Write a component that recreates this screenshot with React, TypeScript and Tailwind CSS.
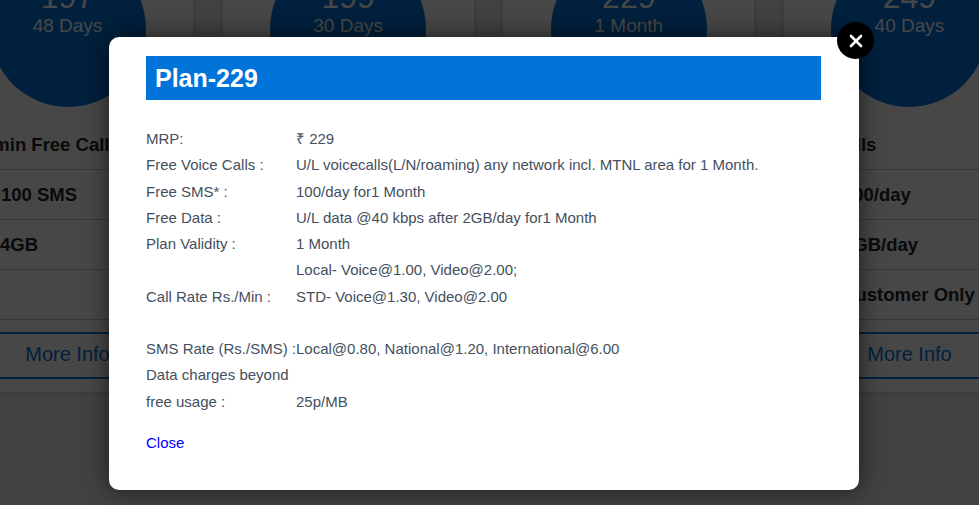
import React from "react";

const cards = [
  { n: "197", d: "48 Days", rows: [
    { t: "1000 min Free Calls", c: "pl-[5px]" },
    { t: "100 SMS", c: "pl-[59px]" },
    { t: "4GB", c: "pl-[58px]" },
    { t: "", c: "" },
  ] },
  { n: "199", d: "30 Days", rows: [
    { t: "U/L Free Calls", c: "pl-[20px]" },
    { t: "100/day", c: "pl-[60px]" },
    { t: "2GB/day", c: "pl-[60px]" },
    { t: "", c: "" },
  ] },
  { n: "229", d: "1 Month", rows: [
    { t: "U/L Free Calls", c: "pl-[20px]" },
    { t: "100/day", c: "pl-[60px]" },
    { t: "2GB/day", c: "pl-[60px]" },
    { t: "", c: "" },
  ] },
  { n: "249", d: "40 Days", rows: [
    { t: "Free Calls", c: "pl-[4px]" },
    { t: "100/day", c: "pl-[59px]" },
    { t: "3GB/day", c: "pl-[59px]" },
    { t: "New Customer Only", c: "pl-[15px]" },
  ] },
];

const details: [string, string][] = [
  ["MRP:", "₹ 229"],
  ["Free Voice Calls :", "U/L voicecalls(L/N/roaming) any network incl. MTNL area for 1 Month."],
  ["Free SMS* :", "100/day for1 Month"],
  ["Free Data :", "U/L data @40 kbps after 2GB/day for1 Month"],
  ["Plan Validity :", "1 Month"],
  ["", "Local- Voice@1.00, Video@2.00;"],
  ["Call Rate Rs./Min :", "STD- Voice@1.30, Video@2.00"],
  ["", "\u00a0"],
  ["SMS Rate (Rs./SMS) :", "Local@0.80, National@1.20, International@6.00"],
  ["Data charges beyond", ""],
  ["free usage :", "25p/MB"],
];

export default function App() {
  return (
    <div className="relative h-[505px] w-[979px] overflow-hidden bg-[#ececec] font-['Liberation_Sans',Arial,sans-serif]">
      <div className="ml-[-58px] flex gap-[29.67px]">
        {cards.map((card) => (
          <div key={card.n} className="flex h-[392px] w-[251px] shrink-0 flex-col items-center bg-white shadow-[0_0_6px_rgba(0,0,0,0.2)]">
            <div className="mt-[-49px] flex h-[156px] w-[156px] shrink-0 flex-col items-center rounded-full bg-[#0074d9] pt-[29px] text-white">
              <div className="text-[32px] leading-[35px]">{card.n}</div>
              <div className="text-[19px] leading-[22px]">{card.d}</div>
            </div>
            <div className="mt-[13px] w-full">
              {card.rows.map((r, i) => (
                <div key={i} className={`h-[50px] whitespace-nowrap border-b border-[#c4c4c4] text-[18.5px] font-bold leading-[50px] text-[#212529] ${r.c}`}>
                  {r.t}
                </div>
              ))}
            </div>
            <div className="mt-[12px] h-[47px] w-full border-y-2 border-[#0074d9] text-center text-[20px] leading-[41px] text-[#0074d9]">
              More Info
            </div>
          </div>
        ))}
      </div>
      <div className="absolute inset-0 bg-black/[0.72] pl-[109px] pt-[37px]">
        <div className="relative h-[453px] w-[750px] rounded-[10px] bg-white pl-[37px] pr-[38px] pt-[19px] shadow-[0_0_25px_rgba(0,0,0,0.6)]">
          <button className="absolute right-[-15px] top-[-15px] flex h-[37px] w-[37px] items-center justify-center rounded-full bg-black">
            <svg width="14" height="14" viewBox="0 0 14 14" fill="none" stroke="white" strokeWidth="2.6" strokeLinecap="round">
              <path d="M2 2 L12 12 M12 2 L2 12" />
            </svg>
          </button>
          <h2 className="h-[44px] bg-[#0074d9] pl-[9px] text-[25px] font-bold leading-[45px] text-white">Plan-229</h2>
          <div className="mt-[26px] grid grid-cols-[150px_1fr] text-[15px] leading-[26.25px] text-[#444f5e]">
            {details.map(([a, b], i) => (
              <React.Fragment key={i}>
                <div className="whitespace-nowrap">{a}</div>
                <div>{b}</div>
              </React.Fragment>
            ))}
          </div>
          <a className="mt-[15px] block text-[15px] leading-[26px] text-[#0000ff]">Close</a>
        </div>
      </div>
    </div>
  );
}
